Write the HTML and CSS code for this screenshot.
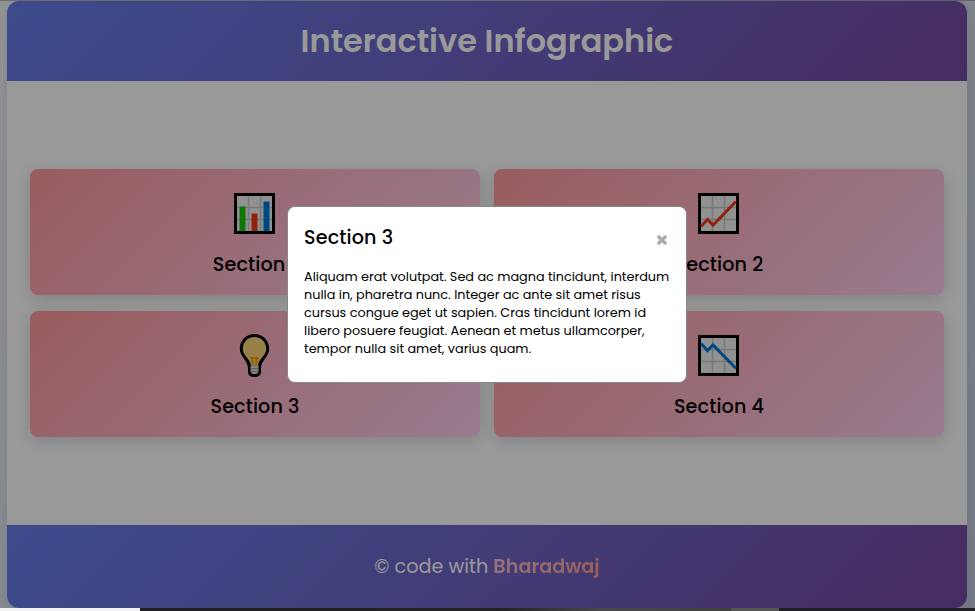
FILE: index.html
```html
<!DOCTYPE html>
<html lang="en">
<head>
<meta charset="utf-8">
<title>Interactive Infographic</title>
<link rel="stylesheet" href="styles.css">
</head>
<body>
<div class="container">
  <header class="header"><h1>Interactive Infographic</h1></header>
  <main class="grid">
    <section class="card">
      <svg class="icon" viewBox="0 0 41 41"><rect x="1.500" y="1.500" width="38" height="38" fill="#f2f2f2" stroke="#000" stroke-width="3"/><path d="M14.500 3v35M26.500 3v35M3 14.500h35M3 26.500h35" stroke="#c8c8c8" stroke-width="1.500"/><path d="M5.500 13.500h6V38h-6z" fill="#16c60c"/><path d="M17.500 20.500h6V38h-6z" fill="#f03a17"/><path d="M29.500 8.500h6V38h-6z" fill="#0078d7"/></svg>
      <h2>Section 1</h2>
    </section>
    <section class="card">
      <svg class="icon" viewBox="0 0 41 41"><rect x="1.500" y="1.500" width="38" height="38" fill="#f2f2f2" stroke="#000" stroke-width="3"/><path d="M14.500 3v35M26.500 3v35M3 14.500h35M3 26.500h35" stroke="#c8c8c8" stroke-width="1.500"/><path d="M3 33.500l6.500-7L15 32 38 8.500" fill="none" stroke="#f03a17" stroke-width="3"/></svg>
      <h2>Section 2</h2>
    </section>
    <section class="card">
      <svg class="icon" viewBox="0 0 41 41"><path d="M20.500-1C12-1 5.800 5.500 5.800 13.800c0 8.200 8.200 11.200 8.200 19.700V37c0 3 2.500 5 6.500 5s6.500-2 6.500-5v-3.500c0-8.500 8.200-11.500 8.200-19.700C35.200 5.500 29-1 20.500-1z"/><path d="M20.500 2C13.500 2 8.800 7.200 8.800 13.800c0 6.700 7 9.700 8.200 16.700h7c1.200-7 8.200-10 8.200-16.700C32.200 7.200 27.500 2 20.500 2z" fill="#fdd57e"/><path d="M16 23h9M18.500 23v8M22.500 23v8" stroke="#f7a20d" stroke-width="2" fill="none"/><path d="M16.500 30.500h8V37l-2 2h-4l-2-2z" fill="#dedede"/><path d="M16.500 33.500h8M16.500 36.500h8" stroke="#888" stroke-width=".8"/></svg>
      <h2>Section 3</h2>
    </section>
    <section class="card">
      <svg class="icon" viewBox="0 0 41 41"><rect x="1.500" y="1.500" width="38" height="38" fill="#f2f2f2" stroke="#000" stroke-width="3"/><path d="M14.500 3v35M26.500 3v35M3 14.500h35M3 26.500h35" stroke="#c8c8c8" stroke-width="1.500"/><path d="M3 8.500l6.500 7L15 10l23 23.500" fill="none" stroke="#0078d7" stroke-width="3"/></svg>
      <h2>Section 4</h2>
    </section>
  </main>
  <footer class="footer"><p>© code with <span class="author">Bharadwaj</span></p></footer>
</div>
<div class="overlay">
  <div class="modal">
    <div class="modal-head"><h2>Section 3</h2>
      <svg class="close" viewBox="0 0 12 12"><path d="M1.800 2l8.400 8M10.200 2l-8.400 8" stroke="#aaa" stroke-width="3.200"/></svg></div>
    <p class="copy">Aliquam erat volutpat. Sed ac magna tincidunt, interdum<br>nulla in, pharetra nunc. Integer ac ante sit amet risus<br>cursus congue eget ut sapien. Cras tincidunt lorem id<br>libero posuere feugiat. Aenean et metus ullamcorper,<br>tempor nulla sit amet, varius quam.</p>
  </div>
</div>
<div class="taskbar"></div>
</body>
</html>
```
FILE: styles.css
```css
* { box-sizing: border-box; margin: 0; padding: 0; }
body {
  width: 975px;
  height: 611px;
  overflow: hidden;
  padding: 1px 8px 3px 7px;
  font-family: Poppins, Inter, sans-serif;
  color: #000;
  background: linear-gradient(135deg, #f5f7fa, #c3cfe2);
}
.container {
  height: 607px;
  display: flex;
  flex-direction: column;
  background: #fff;
  border-radius: 12px;
  overflow: hidden;
  box-shadow: 0 4px 16px rgba(0, 0, 0, .1);
}
.header, .footer {
  display: flex;
  justify-content: center;
  align-items: center;
  color: #fff;
  background: linear-gradient(135deg, #667eea, #764ba2);
}
.header { height: 80px; }
.header h1 { font-size: 32px; line-height: 48px; font-weight: 600; white-space: nowrap; }
.footer { height: 83px; font-size: 19.200px; white-space: nowrap; }
.author {
  font-weight: 600;
  color: transparent;
  background: linear-gradient(135deg, #fbc2d5, #ff9a8e);
  -webkit-background-clip: text;
  background-clip: text;
}
.grid {
  flex: 1;
  display: grid;
  grid-template-columns: 450px 450px;
  grid-template-rows: 126px 126px;
  gap: 16px 14px;
  place-content: center;
}
.card {
  display: flex;
  flex-direction: column;
  align-items: center;
  padding-top: 24px;
  border-radius: 8px;
  background: linear-gradient(135deg, #ff9a9e, #fecfef);
  box-shadow: 0 4px 16px rgba(0, 0, 0, .15);
}
.icon { width: 41px; height: 41px; margin-right: 1px; overflow: visible; }
h2 { font-size: 19.200px; line-height: 28px; font-weight: 500; letter-spacing: .1px; white-space: nowrap; }
.card h2 { margin-top: 17px; }
.overlay {
  position: fixed;
  inset: 0;
  display: flex;
  justify-content: center;
  padding: 205px 1px 0 0;
  border-top: 1px solid rgba(40, 40, 50, .35);
  background: rgba(0, 0, 0, .4);
}
.modal {
  width: 400px;
  height: 177px;
  padding: 17px 16px 16px;
  background: #fff;
  border: 1px solid #888;
  border-radius: 8px;
}
.modal-head { display: flex; justify-content: space-between; }
.close { width: 12px; height: 12px; margin: 10px 2px 0 0; }
.copy { margin-top: 16px; font-size: 12.800px; line-height: 18px; font-weight: 400; white-space: nowrap; }
.taskbar {
  position: fixed;
  left: 0;
  right: 0;
  bottom: 0;
  height: 3px;
  background: linear-gradient(90deg, #f3f3f3 140px, #201f21 140px, #222 500px, #484848 600px, #414141 731px, #555 731px, #555 779px, #201f23 779px);
}
```
